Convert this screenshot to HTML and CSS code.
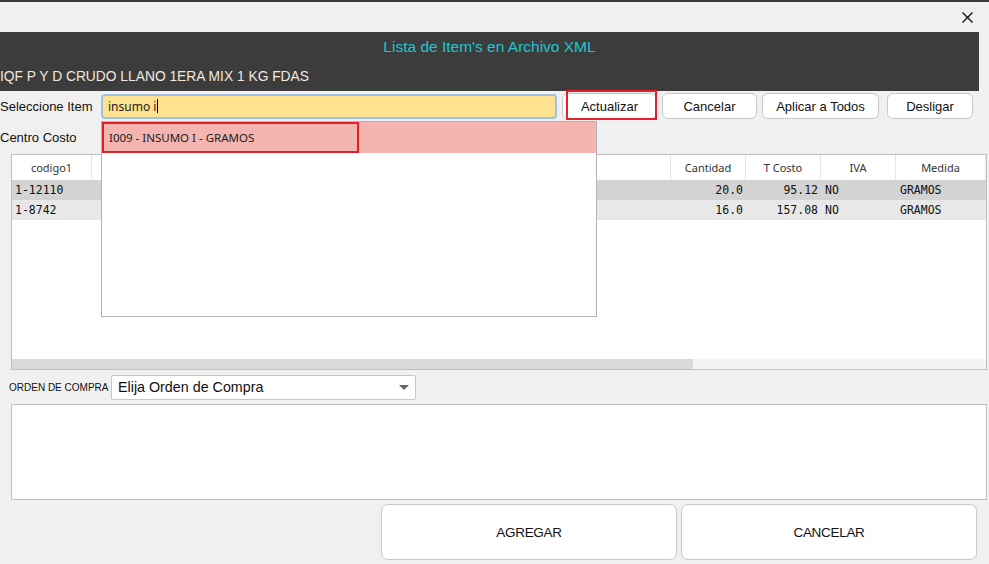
FILE: index.html
```html
<!DOCTYPE html>
<html lang="es">
<head>
    <meta charset="UTF-8">
    <meta name="viewport" content="width=device-width, initial-scale=1.0">
    <title>Lista de Items XML</title>
    <link rel="stylesheet" href="styles.css">
</head>
<body>
    <div class="window">
        <div class="topline"></div>
        <div class="titlebar">
            <svg class="close" width="11" height="11" viewBox="0 0 11 11">
                <path d="M0.5 0.5 L10.5 10.5 M10.5 0.5 L0.5 10.5" stroke="#111" stroke-width="1.4" fill="none"/>
            </svg>
        </div>

        <div class="header">
            <div class="header-title">Lista de Item's en Archivo XML</div>
            <div class="header-sub">IQF P Y D CRUDO LLANO 1ERA MIX 1 KG FDAS</div>
        </div>

        <div class="item-row">
            <label class="row-label">Seleccione Item</label>
            <div class="search">
                <div class="search-input">insumo i<span class="caret"></span></div>
                <div class="suggest">
                    <div class="suggest-item selected"><span class="suggest-mark">I009 - INSUMO I - GRAMOS</span></div>
                </div>
            </div>
            <button class="btn btn-marked">Actualizar</button>
            <button class="btn btn-cancel">Cancelar</button>
            <button class="btn btn-all">Aplicar a Todos</button>
            <button class="btn btn-unlink">Desligar</button>
        </div>

        <div class="centro-row">
            <label class="row-label">Centro Costo</label>
        </div>

        <div class="grid">
            <div class="grid-row grid-head">
                <div class="cell c-code">codigo1</div>
                <div class="cell c-desc"></div>
                <div class="cell c-num">Cantidad</div>
                <div class="cell c-num">T Costo</div>
                <div class="cell c-num">IVA</div>
                <div class="cell c-med">Medida</div>
            </div>
            <div class="grid-row grid-data odd">
                <div class="cell c-code">1-12110</div>
                <div class="cell c-desc"></div>
                <div class="cell c-num right">20.0</div>
                <div class="cell c-num right">95.12</div>
                <div class="cell c-num left">NO</div>
                <div class="cell c-med left">GRAMOS</div>
            </div>
            <div class="grid-row grid-data even">
                <div class="cell c-code">1-8742</div>
                <div class="cell c-desc"></div>
                <div class="cell c-num right">16.0</div>
                <div class="cell c-num right">157.08</div>
                <div class="cell c-num left">NO</div>
                <div class="cell c-med left">GRAMOS</div>
            </div>
            <div class="grid-fill"></div>
            <div class="hscroll"><div class="hscroll-thumb"></div></div>
        </div>

        <div class="orden-row">
            <label class="orden-label">ORDEN DE COMPRA</label>
            <div class="select">
                <span>Elija Orden de Compra</span>
                <span class="select-arrow"></span>
            </div>
        </div>

        <div class="notes"></div>

        <div class="actions">
            <button class="big-btn">AGREGAR</button>
            <button class="big-btn">CANCELAR</button>
        </div>
    </div>
</body>
</html>
```

FILE: styles.css
```css
body {
    margin: 0;
    font-family: "Liberation Sans", Arial, sans-serif;
    background-color: #f0f0f0;
    color: #000;
}
.window {
    width: 989px;
    height: 564px;
    overflow: hidden;
    display: flex;
    flex-direction: column;
}
.topline {
    height: 2px;
    background-color: #3c3c3c;
}
.titlebar {
    height: 30px;
    display: flex;
    align-items: center;
    justify-content: flex-end;
    padding-right: 16px;
}
.header {
    width: 979px;
    height: 59px;
    background-color: #3c3c3c;
}
.header-title {
    height: 30px;
    line-height: 30px;
    text-align: center;
    color: #1ec5d3;
    font-size: 15.5px;
}
.header-sub {
    height: 29px;
    line-height: 29px;
    color: #f2e8de;
    font-size: 13.8px;
}
.item-row {
    height: 30px;
    display: flex;
    align-items: center;
    gap: 5px;
}
.row-label {
    font-size: 13px;
    width: 96px;
    color: #111;
}
.search {
    position: relative;
    width: 456px;
}
.search-input {
    height: 21px;
    border: 2px solid #9fc1e6;
    border-radius: 4px;
    background-color: #fee28f;
    padding-left: 5px;
    font-family: "Noto Sans", sans-serif;
    font-size: 12px;
    line-height: 21px;
    color: #222;
}
.caret {
    display: inline-block;
    width: 1px;
    height: 14px;
    background-color: #000;
    vertical-align: -2px;
    margin-left: 1px;
}
.suggest {
    position: absolute;
    top: 27px;
    left: 0;
    width: 494px;
    height: 194px;
    background-color: #fff;
    border: 1px solid #b4b4b4;
    z-index: 5;
}
.suggest-item {
    height: 31px;
    background-color: #f4b5b1;
    display: flex;
}
.suggest-mark {
    width: 248px;
    border: 2px solid #e5202a;
    padding-left: 5px;
    font-family: "Noto Sans", sans-serif;
    font-size: 11.5px;
    line-height: 27px;
    color: #222;
}
.btn {
    height: 26px;
    background-color: #fff;
    border: 1px solid #c8c8c8;
    border-radius: 6px;
    font-family: "Liberation Sans", Arial, sans-serif;
    font-size: 13px;
    color: #111;
    padding: 0;
    position: relative;
}
.btn-marked {
    width: 95px;
}
.btn-marked::after {
    content: "";
    position: absolute;
    left: 3px;
    top: -4px;
    width: 87px;
    height: 26px;
    border: 2px solid #e5202a;
}
.btn-cancel {
    width: 95px;
}
.btn-all {
    width: 117px;
}
.btn-unlink {
    width: 86px;
    margin-left: 3px;
}
.centro-row {
    height: 33px;
    display: flex;
    align-items: center;
}
.grid {
    margin-left: 11px;
    width: 974px;
    height: 214px;
    border: 1px solid #c0c0c0;
    background-color: #fff;
    display: flex;
    flex-direction: column;
}
.grid-row {
    display: flex;
}
.grid-head {
    height: 25px;
    font-family: "Noto Sans", sans-serif;
    font-size: 11px;
    color: #333;
}
.grid-head .cell {
    border-right: 1px solid #e6e6e6;
    text-align: center;
    line-height: 25px;
}
.grid-data {
    height: 20px;
    font-family: "DejaVu Sans Mono", monospace;
    font-size: 11.5px;
    line-height: 20px;
    color: #111;
}
.odd {
    background-color: #d3d3d3;
}
.even {
    background-color: #e8e8e8;
}
.cell {
    box-sizing: border-box;
    white-space: nowrap;
    overflow: hidden;
}
.c-code {
    width: 80px;
}
.grid-data .c-code {
    padding-left: 3px;
}
.c-desc {
    width: 579px;
}
.c-num {
    width: 75px;
}
.c-med {
    width: 90px;
}
.grid-data .right {
    text-align: right;
    padding-right: 3px;
}
.grid-data .left {
    padding-left: 4px;
}
.grid-fill {
    flex: 1;
}
.hscroll {
    height: 10px;
    background-color: #f4f4f4;
}
.hscroll-thumb {
    width: 681px;
    height: 10px;
    background-color: #dadada;
}
.orden-row {
    height: 34px;
    display: flex;
    align-items: center;
}
.orden-label {
    width: 102px;
    padding-left: 9px;
    font-size: 10px;
    color: #111;
}
.select {
    width: 293px;
    height: 23px;
    border: 1px solid #c8c8c8;
    border-radius: 2px;
    background-color: #fff;
    display: flex;
    align-items: center;
    justify-content: space-between;
    padding: 0 4px 0 6px;
    font-size: 14.3px;
    color: #111;
}
.select-arrow {
    width: 0;
    height: 0;
    border-left: 5px solid transparent;
    border-right: 5px solid transparent;
    border-top: 5px solid #666;
    margin-right: 2px;
}
.notes {
    margin-left: 11px;
    width: 974px;
    height: 94px;
    border: 1px solid #c0c0c0;
    background-color: #fff;
}
.actions {
    margin-top: 4px;
    padding-left: 381px;
    display: flex;
    gap: 4px;
}
.big-btn {
    width: 296px;
    height: 56px;
    background-color: #fff;
    border: 1px solid #c8c8c8;
    border-radius: 7px;
    font-family: "Liberation Sans", Arial, sans-serif;
    font-size: 13.5px;
    color: #111;
    letter-spacing: -0.3px;
}
```
